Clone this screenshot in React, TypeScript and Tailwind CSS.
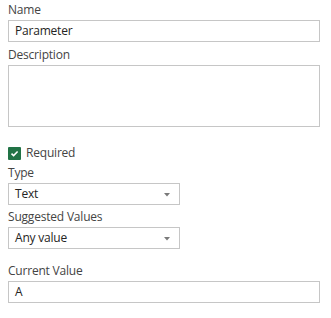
import React from "react";

const font = { fontFamily: '"Open Sans", "Noto Sans", sans-serif' };

function Label({ children, className = "" }: { children: React.ReactNode; className?: string }) {
  return (
    <div className={`h-[20px] leading-[20px] text-[12px] text-[#444444] ${className}`}>{children}</div>
  );
}

function Arrow() {
  return (
    <svg width="6" height="4" viewBox="0 0 6 4" className="absolute right-[9px] top-[9px]">
      <path d="M0 0 L6 0 L3 3.5 Z" fill="#7a7a7a" />
    </svg>
  );
}

function Select({ value }: { value: string }) {
  return (
    <div className="relative w-[172px] h-[22px] border border-[#c6c6c6] bg-white pl-[6px] leading-[20px] text-[12px] text-[#252423]">
      {value}
      <Arrow />
    </div>
  );
}

export default function App() {
  return (
    <div className="w-[331px] h-[318px] bg-white pl-[8px] pr-[11px] tracking-[-0.2px]" style={font}>
      <Label className="h-[19px] leading-[19px]">Name</Label>
      <div className="h-[22px] border border-[#c6c6c6] pl-[6px] leading-[20px] text-[12px] text-[#252423]">
        Parameter
      </div>
      <Label className="mt-[3px]">Description</Label>
      <div className="h-[62px] border border-[#c6c6c6]" />
      <div className="mt-[20px] flex items-center h-[12px] gap-[5px]">
        <div className="w-[13px] h-[13px] rounded-[1px] bg-[#217346] flex items-center justify-center">
          <svg width="9" height="9" viewBox="0 0 9 9">
            <path d="M1.5 4.6 L3.6 6.6 L7.6 2.4" stroke="white" strokeWidth="1.5" fill="none" />
          </svg>
        </div>
        <span className="text-[12px] text-[#444444] leading-[12px]">Required</span>
      </div>
      <Label className="mt-[4px]">Type</Label>
      <Select value="Text" />
      <Label className="mt-[2px]">Suggested Values</Label>
      <Select value="Any value" />
      <Label className="mt-[12px]">Current Value</Label>
      <div className="h-[22px] border border-[#c6c6c6] pl-[6px] leading-[20px] text-[12px] text-[#252423]">
        A
      </div>
    </div>
  );
}
